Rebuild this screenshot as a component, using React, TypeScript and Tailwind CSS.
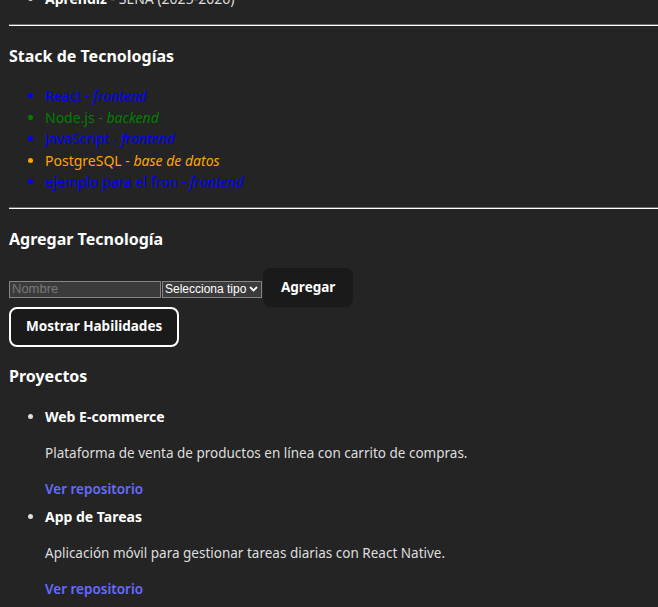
const techs = [
  { name: 'React', kind: 'frontend', color: 'text-[#0000ff]' },
  { name: 'Node.js', kind: 'backend', color: 'text-[#008000]' },
  { name: 'JavaScript', kind: 'frontend', color: 'text-[#0000ff]' },
  { name: 'PostgreSQL', kind: 'base de datos', color: 'text-[#ffa500]' },
  { name: 'ejemplo para el fron', kind: 'frontend', color: 'text-[#0000ff]' },
]

const projects = [
  { title: 'Web E-commerce', desc: 'Plataforma de venta de productos en línea con carrito de compras.' },
  { title: 'App de Tareas', desc: 'Aplicación móvil para gestionar tareas diarias con React Native.' },
]

function Rule({ className = '' }: { className?: string }) {
  return <div className={`h-[2px] border-t border-t-[#6b6b6b] border-b border-b-white ${className}`} />
}

export default function App() {
  return (
    <div className="min-h-screen overflow-hidden bg-[#242424] text-[#dedede] font-['Noto_Sans','Open_Sans',sans-serif] text-[14px]">
      <div className="pl-[9px]">
        {/* Experiencia (cortada arriba) */}
        <ul className="mt-[-12px] list-disc pl-[36px] marker:text-[#dedede]">
          <li className="leading-[22px]">
            <strong className="font-bold text-white">Aprendiz</strong> - SENA (2025-2026)
          </li>
        </ul>

        <Rule className="mt-[14px]" />

        {/* Stack */}
        <h3 className="mt-[18px] text-[16px] font-bold leading-[24px] text-white">Stack de Tecnologías</h3>
        <ul className="mt-[17px] list-disc pl-[36px]">
          {techs.map((t) => (
            <li key={t.name} className={`leading-[21.5px] ${t.color}`}>
              {t.name} - <em className="italic">{t.kind}</em>
            </li>
          ))}
        </ul>

        <Rule className="mt-[14px]" />

        {/* Form */}
        <h3 className="mt-[18px] text-[16px] font-bold leading-[24px] text-white">Agregar Tecnología</h3>
        <div className="mt-[17px] flex items-start">
          <input
            placeholder="Nombre"
            className="mt-[13px] h-[17px] w-[152px] border border-[#858585] bg-[#3b3b3b] px-[2px] font-['Liberation_Sans',Arial,sans-serif] text-[13px] text-white placeholder:text-[#777] outline-none"
          />
          <div className="ml-[1px] mt-[13px] flex h-[17px] w-[100px] items-center justify-between whitespace-nowrap border border-[#858585] bg-[#3b3b3b] pl-[2px] pr-[3px] font-['Liberation_Sans',Arial,sans-serif] text-[12px] leading-none text-white">
            <span>Selecciona tipo</span>
            <svg width="9" height="6" viewBox="0 0 9 6" fill="none" className="shrink-0">
              <path d="M1 1l3.5 3.5L8 1" stroke="white" strokeWidth="1.8" />
            </svg>
          </div>
          <button className="ml-[1px] h-[39px] rounded-[8px] bg-[#1a1a1a] px-[18px] text-[13.5px] font-bold text-white">
            Agregar
          </button>
        </div>
        <button className="h-[40px] rounded-[8px] border-2 border-white bg-[#1a1a1a] px-[15px] text-[13.5px] font-bold text-white">
          Mostrar Habilidades
        </button>

        {/* Proyectos */}
        <h3 className="mt-[17px] text-[16px] font-bold leading-[24px] text-white">Proyectos</h3>
        <ul className="list-disc pl-[36px]">
          {projects.map((p, i) => (
            <li key={p.title} className={i === 0 ? 'mt-[18px]' : 'mt-[6px]'}>
              <strong className="block font-bold leading-[21px] text-white">{p.title}</strong>
              <p className="mt-[16px] text-[13.5px] leading-[21px]">{p.desc}</p>
              <a href="#" className="mt-[15px] block text-[13.5px] font-semibold leading-[21px] text-[#646cff]">
                Ver repositorio
              </a>
            </li>
          ))}
        </ul>
      </div>
    </div>
  )
}
